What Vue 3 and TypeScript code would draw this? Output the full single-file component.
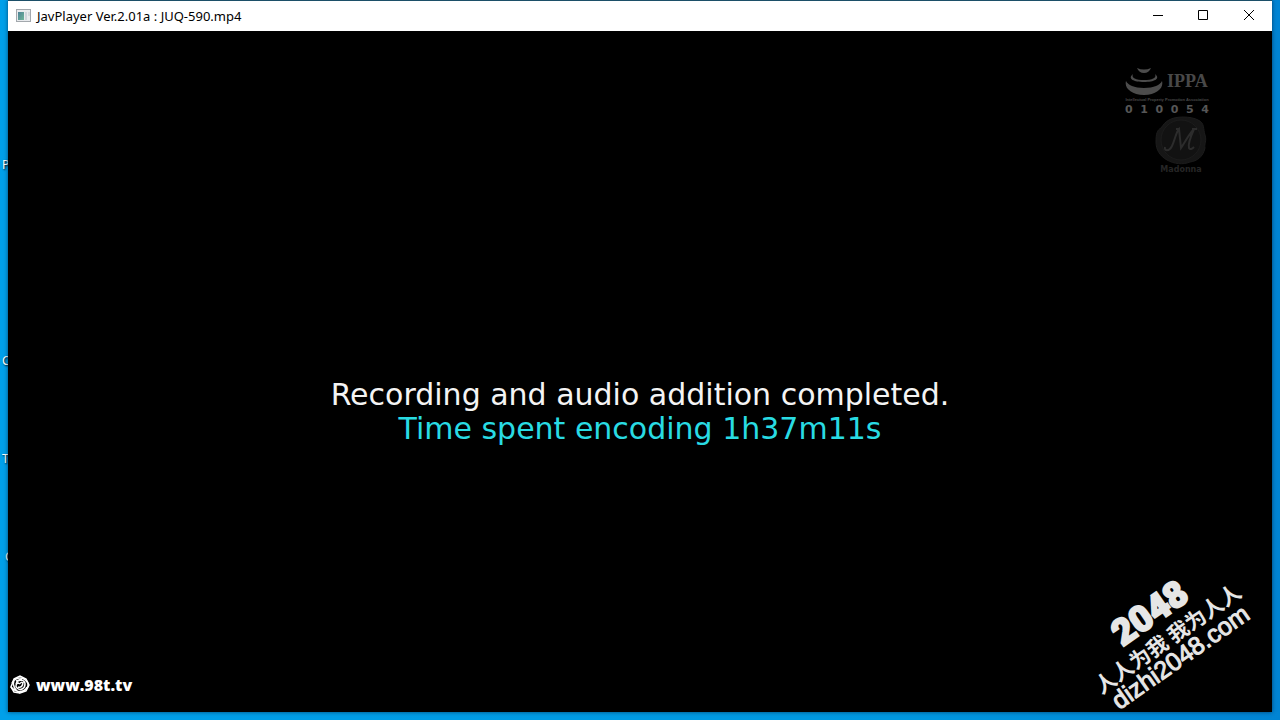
<script setup lang="ts">
interface Shortcut {
  name: string
  letter: string
  top: number
  left: number
}

const title = 'JavPlayer Ver.2.01a : JUQ-590.mp4'

const shortcuts: Shortcut[] = [
  { name: 'p', letter: 'P', top: 156, left: 2 },
  { name: 'c1', letter: 'C', top: 352, left: 2 },
  { name: 't', letter: 'T', top: 450, left: 2 },
  { name: 'c2', letter: 'C', top: 548, left: 5 },
]

const licence: string[] = ['0', '1', '0', '0', '5', '4']
</script>

<template>
  <div class="desktop">
    <span
      v-for="item in shortcuts"
      :key="item.name"
      class="shortcut"
      :style="{ top: item.top + 'px', left: item.left + 'px' }"
    >{{ item.letter }}</span>

    <main class="window">
      <header class="titlebar">
        <svg class="app-icon" viewBox="0 0 16 14" aria-hidden="true">
          <defs>
            <linearGradient id="screen" x1="0" y1="0" x2="1" y2="1">
              <stop offset="0" stop-color="#4d8296" />
              <stop offset="1" stop-color="#6fb59a" />
            </linearGradient>
          </defs>
          <rect x="0.5" y="0.5" width="14" height="12" fill="#e9ebee" stroke="#a3a8ad" />
          <rect x="2" y="3" width="6" height="8" fill="url(#screen)" />
          <rect x="9" y="3" width="2" height="8" fill="#cfd5dc" />
          <rect x="12" y="3" width="2" height="4" fill="#d5dade" />
        </svg>
        <h1 class="title">{{ title }}</h1>
        <div class="controls">
          <button type="button" aria-label="Minimize">
            <svg viewBox="0 0 11 11"><path d="M1 5.5H11" /></svg>
          </button>
          <button type="button" aria-label="Maximize">
            <svg viewBox="0 0 11 11"><path d="M0.5 0.5H9.5V9.5H0.5Z" /></svg>
          </button>
          <button type="button" aria-label="Close">
            <svg viewBox="0 0 11 11"><path d="M0 0L10 10M10 0L0 10" /></svg>
          </button>
        </div>
      </header>

      <section class="screen">
        <div class="message">
          <p>Recording and audio addition completed.</p>
          <p class="elapsed">Time spent encoding 1h37m11s</p>
        </div>

        <div class="badges">
          <div class="ippa">
            <svg viewBox="0 0 38 30" aria-hidden="true">
              <path d="M12 2Q19 5 26 2Q24 7 19 7Q14 7 12 2Z" />
              <path d="M8 8C6 12 11 14 19 14C27 14 32 12 30 8C36 13 29 16 19 16C9 16 2 13 8 8Z" />
              <path d="M1 15C3 19 9 22 19 22C29 22 35 19 37 15C39 22 32 29 19 29C6 29 -1 22 1 15Z" />
            </svg>
            <span>IPPA</span>
          </div>
          <div class="fine">Intellectual Property Promotion Association</div>
          <div class="licence">
            <span v-for="(digit, i) in licence" :key="i">{{ digit }}</span>
          </div>
          <div class="madonna">
            <svg viewBox="0 0 52 50" aria-hidden="true">
              <path class="seal" d="M14 4C20 0 36 0 43 4C50 7 48 13 50 19C52 25 49 28 50 32C48 41 42 45 35 46C28 49 19 48 12 44C5 40 1 34 1 26C1 18 2 14 6 12C9 8 10 6 14 4Z" />
              <circle class="rim" cx="26" cy="24" r="20" />
              <path class="mono" d="M10 31C9 35 14 36 17 30C20 24 21 16 24 13L26 32C30 26 34 18 39 13C35 22 33 29 34 32C35 34 37 33 39 31M21 13H25M37 13H42" />
            </svg>
            <span>Madonna</span>
          </div>
        </div>

        <div class="stamp">
          <strong>2048</strong>
          <span class="slogan" lang="zh">人人为我 我为人人</span>
          <span class="domain">dizhi2048.com</span>
        </div>

        <div class="site">
          <svg viewBox="0 0 20 20" aria-hidden="true">
            <path d="M4 4L10 1L16 4L19 10L16 16L10 18L4 17L1 12Z" />
            <path d="M2 8C6 1 14 2 17 7M4 5C2 10 5 16 10 18M1 12C6 18 14 18 17 12M17 6C20 12 16 16 11 17" />
            <path d="M6 9C8 3 15 5 15 9C15 14 10 16 7 13C5 11 6 8 9 8M13 7C13 11 11 13 8 12M9 9L12 7M6 6L12 4" />
          </svg>
          <span>www.98t.tv</span>
        </div>
      </section>
    </main>
  </div>
</template>

<style>
body {
  margin: 0;
}
</style>

<style scoped>
.desktop {
  position: relative;
  display: flex;
  box-sizing: border-box;
  min-height: 100vh;
  padding: 0 8px 8px;
  background: linear-gradient(90deg, #00a0ea 0%, #0098e0 70%, #0084d4 100%);
  overflow: hidden;
}

.shortcut {
  position: absolute;
  font: 12px/18px "Noto Sans", sans-serif;
  color: #fff;
  text-shadow: 1px 1px 2px #000;
}

.window {
  position: relative;
  display: flex;
  flex: 1;
  flex-direction: column;
  background: #000;
  border-top: 1px solid #1c4f68;
  box-shadow: 0 0 4px rgba(0, 30, 60, 0.7);
}

.titlebar {
  display: flex;
  align-items: center;
  height: 30px;
  padding-left: 8px;
  background: #fff;
}

.app-icon {
  width: 16px;
  height: 14px;
}

.title {
  flex: 1;
  margin: 0 0 0 5px;
  font: 400 13px/28px "Noto Sans", sans-serif;
  color: #000;
}

.controls {
  display: flex;
}

.controls button {
  display: flex;
  align-items: flex-start;
  justify-content: center;
  width: 46px;
  height: 30px;
  padding: 9px 0 0;
  background: none;
  border: 0;
}

.controls svg {
  width: 11px;
  height: 11px;
  fill: none;
  stroke: #000;
}

.screen {
  position: relative;
  display: flex;
  flex: 1;
  align-items: center;
  justify-content: center;
  padding-top: 80px;
}

.message {
  font: 30px/34px "DejaVu Sans", Verdana, sans-serif;
  color: #f4f4f4;
  text-align: center;
}

.message p {
  margin: 0;
}

.message .elapsed {
  color: #29dbe3;
}

.badges {
  position: absolute;
  top: 35px;
  right: 63px;
  width: 84px;
  color: #484848;
}

.ippa {
  display: flex;
  align-items: center;
  gap: 4px;
  height: 30px;
  font: 700 18px/30px "Liberation Serif", serif;
}

.ippa svg {
  width: 38px;
  height: 30px;
  fill: #4c4c4c;
}

.fine {
  font: 700 4px/8px "Liberation Sans", sans-serif;
  text-align: center;
  white-space: nowrap;
}

.licence {
  display: flex;
  justify-content: space-between;
  font: 700 11px/12px "DejaVu Sans", sans-serif;
  color: #565656;
}

.madonna {
  display: flex;
  flex-direction: column;
  align-items: center;
  width: 52px;
  margin-left: 30px;
  font: 700 8px/8px "DejaVu Sans", sans-serif;
  color: #262626;
}

.madonna svg {
  width: 52px;
  height: 50px;
}

.seal {
  fill: #161616;
  stroke: #1c1c1c;
}

.rim {
  fill: #121212;
  stroke: #1c1c1c;
}

.mono {
  fill: none;
  stroke: #2c2c2c;
  stroke-width: 2;
}

.stamp {
  position: absolute;
  right: 9px;
  bottom: 38px;
  display: flex;
  flex-direction: column;
  align-items: center;
  width: 200px;
  color: #e6e6e6;
  white-space: nowrap;
  transform: rotate(-35deg);
}

.stamp strong {
  font: 900 36px/38px Roboto, sans-serif;
  -webkit-text-stroke: 2px #e6e6e6;
}

.slogan {
  font: 700 21px/22px "Noto Sans CJK SC", sans-serif;
}

.domain {
  font: 25px/24px "Liberation Sans", Arial, sans-serif;
  -webkit-text-stroke: 1px #e6e6e6;
}

.site {
  position: absolute;
  bottom: 16px;
  left: 2px;
  display: flex;
  align-items: center;
  gap: 6px;
  font: 800 16px/22px "Open Sans", sans-serif;
  color: #fff;
}

.site svg {
  width: 20px;
  height: 20px;
  fill: none;
  stroke: #fff;
  stroke-width: 1.5;
}
</style>
